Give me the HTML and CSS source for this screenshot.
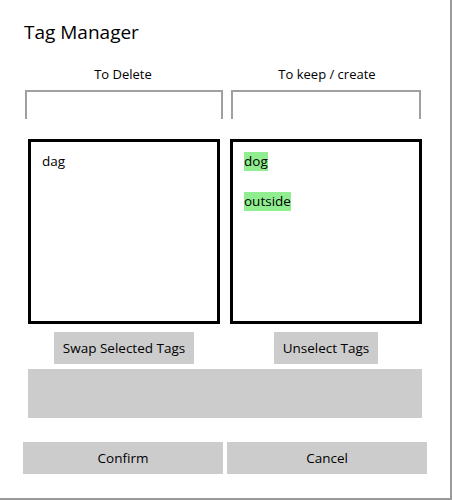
FILE: index.html
```html
<!DOCTYPE html>
<html lang="en">
<head>
  <meta charset="UTF-8">
  <title>Tag Manager</title>
  <link rel="stylesheet" href="styles.css">
</head>
<body>
  <div class="dialog">
    <h1 class="title">Tag Manager</h1>

    <div class="grid">
      <div class="colhead">To Delete</div>
      <div class="colhead">To keep / create</div>

      <input type="text" class="tagbox tagbox-left">
      <input type="text" class="tagbox tagbox-right">

      <div class="taglist taglist-left">
        <div class="tag"><span>dag</span></div>
      </div>
      <div class="taglist taglist-right">
        <div class="tag"><span class="selected">dog</span></div>
        <div class="tag"><span class="selected">outside</span></div>
      </div>

      <div class="btncell"><button class="btn swap">Swap Selected Tags</button></div>
      <div class="btncell"><button class="btn unselect">Unselect Tags</button></div>

      <div class="status"></div>

      <button class="btn action">Confirm</button>
      <button class="btn action">Cancel</button>
    </div>
  </div>
</body>
</html>
```

FILE: styles.css
```css
body {
  margin: 0;
  font-family: "Segoe UI", "Open Sans", sans-serif;
  background: #fff;
}

.dialog {
  width: 427px;
  height: 498px;
  padding-left: 23px;
  background: #fff;
  border-right: 2px solid #9a9a9a;
  border-bottom: 2px solid #9a9a9a;
}

.title {
  margin: 0;
  padding-top: 19px;
  padding-left: 1px;
  font-size: 19px;
  font-weight: normal;
  line-height: 26px;
  color: #000;
}

.grid {
  display: grid;
  grid-template-columns: 200px 200px;
  column-gap: 4px;
  width: 404px;
}

.colhead {
  margin-top: 20px;
  font-size: 13px;
  line-height: 18px;
  text-align: center;
  color: #000;
}

.tagbox {
  box-sizing: border-box;
  height: 29px;
  margin-top: 7px;
  padding: 0;
  border: 2px solid #a0a0a0;
  border-bottom: none;
  background: #fff;
  font: inherit;
  outline: none;
}

.tagbox-left {
  margin-left: 2px;
  width: 198px;
}

.tagbox-right {
  margin-left: 4px;
  width: 190px;
}

.taglist {
  box-sizing: border-box;
  height: 185px;
  margin-top: 20px;
  width: 192px;
  padding: 10px 11px;
  border: 3px solid #000;
}

.taglist-left {
  margin-left: 5px;
}

.taglist-right {
  margin-left: 3px;
}

.tag {
  margin-bottom: 21px;
  font-size: 13.5px;
  line-height: 19px;
}

.tag span {
  display: inline-block;
  height: 19px;
}

.tag .selected {
  background: #90ee90;
}

.btncell {
  display: flex;
  justify-content: center;
  margin-top: 8px;
}

.btn {
  border: none;
  background: #cccccc;
  font-family: inherit;
  font-size: 13.5px;
  color: #000;
  height: 32px;
  padding: 0;
}

.swap {
  width: 140px;
  margin-left: 2px;
}

.unselect {
  width: 104px;
  margin-right: 2px;
}

.status {
  grid-column: 1 / 3;
  margin-top: 5px;
  margin-left: 5px;
  width: 394px;
  height: 49px;
  background: #cccccc;
}

.action {
  margin-top: 24px;
  width: 200px;
}
```
